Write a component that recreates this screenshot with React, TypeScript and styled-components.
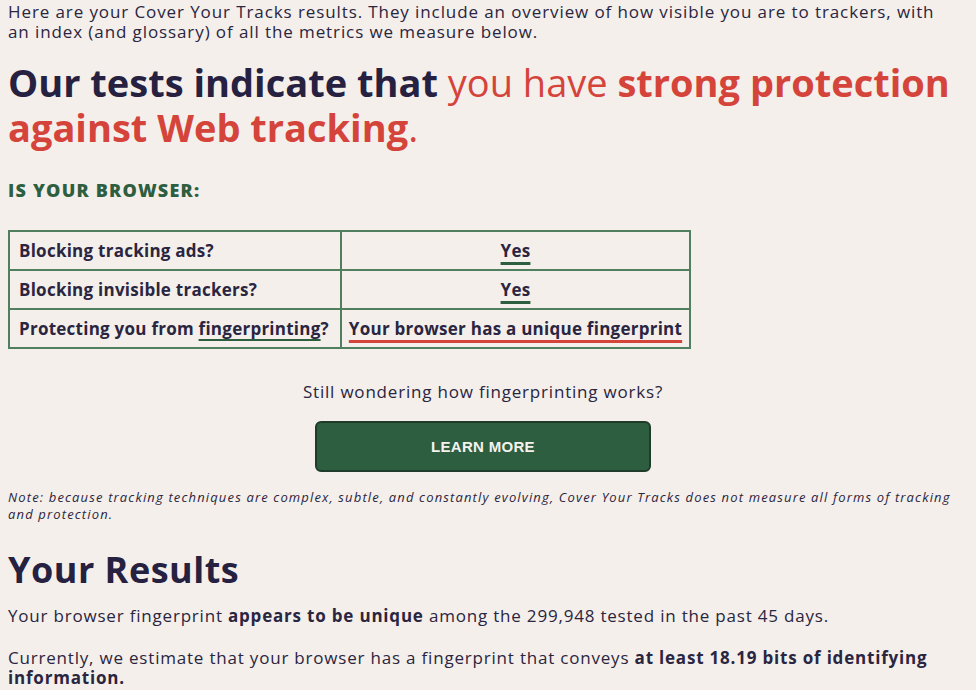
import React from 'react';
import styled, { createGlobalStyle } from 'styled-components';

const GlobalStyle = createGlobalStyle`
  body {
    margin: 0;
    background: #f4efeb;
    color: #2a2540;
    font-family: "Open Sans", "Liberation Sans", sans-serif;
  }
`;

const Page = styled.main`
  width: 950px;
  padding: 0 18px 0 8px;
  display: flex;
  flex-direction: column;
`;

const Intro = styled.p`
  margin: 2px 0 0;
  font-size: 17px;
  line-height: 20px;
  letter-spacing: 0.9px;
`;

const Headline = styled.h1`
  margin: 18px 0 0;
  font-size: 38px;
  line-height: 45px;
  font-weight: 700;
  color: #262140;
`;

const Red = styled.span<{ $bold?: boolean }>`
  color: #d5443b;
  font-weight: ${p => (p.$bold ? 700 : 400)};
`;

const Label = styled.h3`
  margin: 30px 0 0;
  font-size: 18px;
  line-height: 20px;
  font-weight: 800;
  letter-spacing: 1.2px;
  color: #2e5e40;
`;

const Table = styled.table`
  margin-top: 30px;
  width: 683px;
  table-layout: fixed;
  border-collapse: collapse;
  border: 2px solid #4f7f5f;
`;

const Cell = styled.td<{ $center?: boolean }>`
  border: 2px solid #4f7f5f;
  height: 37px;
  padding: 0 ${p => (p.$center ? 6 : 9)}px;
  font-size: 17px;
  font-weight: 700;
  letter-spacing: 0.25px;
  color: #2a2540;
  text-align: ${p => (p.$center ? 'center' : 'left')};
  white-space: nowrap;
  &:first-child {
    width: 312px;
  }
`;

const Verdict = styled.span<{ $bad?: boolean }>`
  text-decoration: underline;
  text-decoration-thickness: 3px;
  text-underline-offset: 5px;
  text-decoration-color: ${p => (p.$bad ? '#d5443b' : '#2e5e40')};
`;

const TermLink = styled.a`
  color: #2a2540;
  text-decoration: underline;
  text-decoration-thickness: 1.5px;
  text-underline-offset: 4px;
  text-decoration-color: #2e5e40;
`;

const LearnBlock = styled.div`
  margin-top: 32px;
  display: flex;
  flex-direction: column;
  align-items: center;
  gap: 18px;
`;

const Question = styled.p`
  margin: 0;
  font-size: 17px;
  line-height: 22px;
  letter-spacing: 0.8px;
`;

const LearnButton = styled.button`
  width: 336px;
  height: 51px;
  background: #2e5e40;
  border: 2px solid #1f3b2a;
  border-radius: 6px;
  color: #f5f2ee;
  font-family: "Liberation Sans", Arial, sans-serif;
  font-size: 15px;
  font-weight: 700;
  letter-spacing: 0.3px;
`;

const Note = styled.p`
  margin: 17px 0 0;
  font-style: italic;
  font-size: 13px;
  line-height: 17px;
  letter-spacing: 1.15px;
`;

const ResultsTitle = styled.h2`
  margin: 24px 0 0;
  font-size: 36px;
  line-height: 46px;
  font-weight: 700;
  letter-spacing: 0.5px;
  color: #262140;
`;

const ResultText = styled.p`
  margin: 13px 0 0;
  font-size: 17px;
  line-height: 20px;
  letter-spacing: 0.8px;
  & + & {
    margin-top: 22px;
  }
  b {
    font-weight: 700;
  }
`;

const rows = [
  { q: 'Blocking tracking ads?', a: 'Yes', bad: false },
  { q: 'Blocking invisible trackers?', a: 'Yes', bad: false },
];

export default function App() {
  return (
    <Page>
      <GlobalStyle />
      <Intro>
        Here are your Cover Your Tracks results. They include an overview of how visible you are to trackers, with
        an index (and glossary) of all the metrics we measure below.
      </Intro>
      <Headline>
        Our tests indicate that <Red>you have </Red>
        <Red $bold>strong protection against Web tracking</Red>
        <Red>.</Red>
      </Headline>
      <Label>IS YOUR BROWSER:</Label>
      <Table>
        <tbody>
          {rows.map(r => (
            <tr key={r.q}>
              <Cell>{r.q}</Cell>
              <Cell $center>
                <Verdict $bad={r.bad}>{r.a}</Verdict>
              </Cell>
            </tr>
          ))}
          <tr>
            <Cell>
              Protecting you from <TermLink href="#">fingerprinting</TermLink>?
            </Cell>
            <Cell $center>
              <Verdict $bad>Your browser has a unique fingerprint</Verdict>
            </Cell>
          </tr>
        </tbody>
      </Table>
      <LearnBlock>
        <Question>Still wondering how fingerprinting works?</Question>
        <LearnButton>LEARN MORE</LearnButton>
      </LearnBlock>
      <Note>
        Note: because tracking techniques are complex, subtle, and constantly evolving, Cover Your Tracks does not measure all forms of tracking
        and protection.
      </Note>
      <ResultsTitle>Your Results</ResultsTitle>
      <ResultText>
        Your browser fingerprint <b>appears to be unique</b> among the 299,948 tested in the past 45 days.
      </ResultText>
      <ResultText>
        Currently, we estimate that your browser has a fingerprint that conveys <b>at least 18.19 bits of identifying information.</b>
      </ResultText>
    </Page>
  );
}
